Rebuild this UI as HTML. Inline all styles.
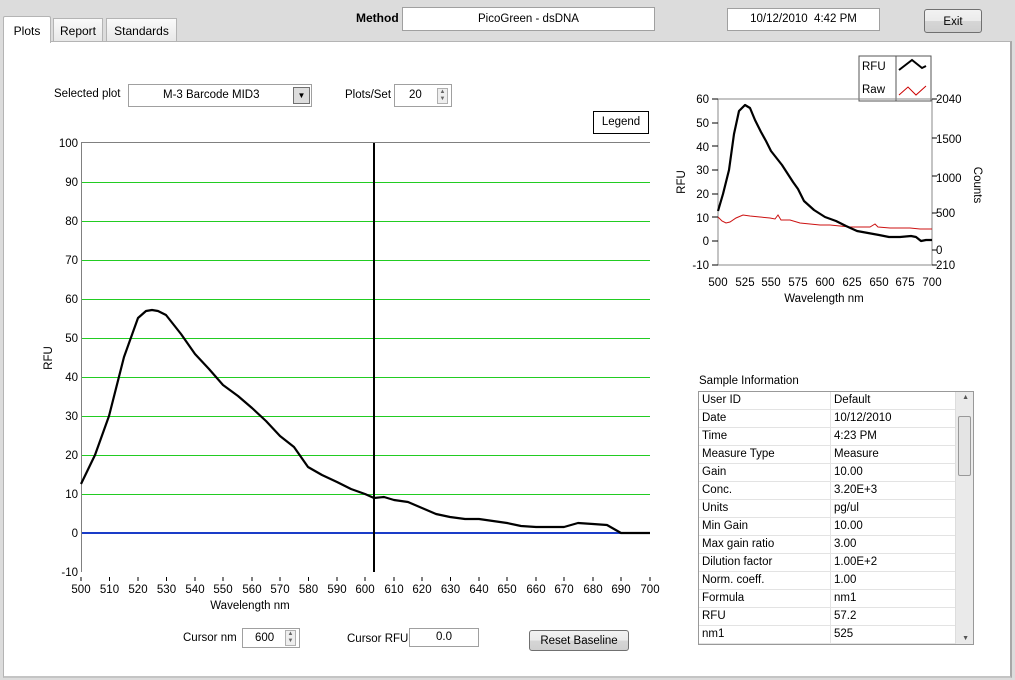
<!DOCTYPE html>
<html><head><meta charset="utf-8"><style>
body{margin:0;width:1015px;height:680px;background:#dcdcdc;font-family:"Liberation Sans",sans-serif;font-size:11.5px;color:#000;position:relative;overflow:hidden}
.a{position:absolute}
.box{position:absolute;background:#fff;border:1px solid #a0a0a0;box-sizing:border-box;text-align:center}
.btn{position:absolute;border:1px solid #707070;border-radius:3px;background:linear-gradient(#f2f2f2,#ebebeb 50%,#d6d6d6 50%,#cfcfcf);box-sizing:border-box;text-align:center}
.spin{position:absolute;width:11px;border:1px solid #b0b0b0;background:#eee;box-sizing:border-box;font-size:6px;line-height:7px;text-align:center;color:#666}
table{border-collapse:collapse;width:258px}
td{height:17px;border-bottom:1px solid #e3e3e3;padding:0 0 0 3px;font-size:11.5px;line-height:17px;white-space:nowrap}
td.c1{width:128px;border-right:1px solid #e3e3e3}
</style></head><body>
<div class="a" style="left:3px;top:41px;width:1006px;height:634px;background:#fff;border:1px solid #b4b4b4;border-right:2px solid #a8a8a8;border-bottom:2px solid #c4c4c4"></div>
<div class="a" style="left:3px;top:16px;width:48px;height:27px;background:#fff;border:1px solid #b4b4b4;border-bottom:none;border-radius:2px 2px 0 0;padding-top:7px;box-sizing:border-box;text-align:center;font-size:12px">Plots</div>
<div class="a" style="left:53px;top:18px;width:50px;height:23px;background:linear-gradient(#fafafa,#e8e8e8);border:1px solid #b4b4b4;border-bottom:none;box-sizing:border-box;padding-top:5px;text-align:center;font-size:12px">Report</div>
<div class="a" style="left:106px;top:18px;width:71px;height:23px;background:linear-gradient(#fafafa,#e8e8e8);border:1px solid #b4b4b4;border-bottom:none;box-sizing:border-box;padding-top:5px;text-align:center;font-size:12px">Standards</div>
<div class="a" style="left:356px;top:11px;font-weight:bold;font-size:12px">Method</div>
<div class="box" style="left:402px;top:7px;width:253px;height:24px;line-height:22px">PicoGreen - dsDNA</div>
<div class="box" style="left:727px;top:8px;width:153px;height:23px;line-height:21px">10/12/2010&nbsp; 4:42 PM</div>
<div class="btn" style="left:924px;top:9px;width:58px;height:24px;line-height:24px">Exit</div>

<div class="a" style="left:54px;top:88px">Selected plot</div>
<div class="box" style="left:128px;top:84px;width:184px;height:23px;line-height:21px;text-align:left;padding-left:34px">M-3 Barcode MID3</div>
<div class="a" style="left:293px;top:87px;width:17px;height:17px;border:1px solid #707070;background:#ddd;box-sizing:border-box;font-size:8px;text-align:center;line-height:16px">▼</div>
<div class="a" style="left:345px;top:89px">Plots/Set</div>
<div class="box" style="left:394px;top:84px;width:58px;height:23px;line-height:21px;text-align:left;padding-left:14px">20</div>
<div class="spin" style="left:437px;top:88px;height:16px">▲<br>▼</div>
<div class="box" style="left:593px;top:111px;width:56px;height:23px;line-height:21px;border-color:#000">Legend</div>

<div class="a" style="left:183px;top:632px">Cursor nm</div>
<div class="box" style="left:242px;top:628px;width:58px;height:20px;line-height:18px;text-align:left;padding-left:12px">600</div>
<div class="spin" style="left:285px;top:630px;height:16px">▲<br>▼</div>
<div class="a" style="left:347px;top:633px">Cursor RFU</div>
<div class="box" style="left:409px;top:628px;width:70px;height:19px;line-height:17px">0.0</div>
<div class="btn" style="left:529px;top:630px;width:100px;height:21px;line-height:20px">Reset Baseline</div>

<svg class="a" style="left:0;top:0" width="1015" height="680" font-family="Liberation Sans" font-size="11.5">
<g fill="#22cc22">
<rect x="82" width="568" y="182" height="1"/><rect x="82" width="568" y="221" height="1"/><rect x="82" width="568" y="260" height="1"/><rect x="82" width="568" y="299" height="1"/><rect x="82" width="568" y="338" height="1"/><rect x="82" width="568" y="377" height="1"/><rect x="82" width="568" y="416" height="1"/><rect x="82" width="568" y="455" height="1"/><rect x="82" width="568" y="494" height="1"/>
</g>
<rect x="82" width="568" y="532" height="2" fill="#1a3cc8"/>
<rect x="81" y="142" width="1" height="430" fill="#808080"/><rect x="81" y="142" width="569" height="1" fill="#808080"/>
<rect x="373" y="143" width="2" height="429" fill="#000"/>
<path d="M81 484L95 455L109 416L124 357L138 318L146 311L152 310L158 311L166 315L181 334L195 354L209 369L223 385L238 396L252 408L266 421L280 436L294 447L308 467L322 475L337 482L351 489L365 494L374 498L384 497L394 500L408 502L422 508L436 514L450 517L465 519L479 519L493 521L507 523L521 526L536 527L550 527L564 527L578 523L593 524L607 525L621 533L650 533" fill="none" stroke="#000" stroke-width="2.2" stroke-linejoin="round"/>
<g text-anchor="end">
<text x="78" y="147">100</text><text x="78" y="186">90</text><text x="78" y="225">80</text><text x="78" y="264">70</text><text x="78" y="303">60</text><text x="78" y="342">50</text><text x="78" y="381">40</text><text x="78" y="420">30</text><text x="78" y="459">20</text><text x="78" y="498">10</text><text x="78" y="537">0</text><text x="78" y="576">-10</text>
</g>
<g stroke="#000"><path d="M81 577v4M109.5 577v4M138 577v4M166.5 577v4M195 577v4M223 577v4M252 577v4M280 577v4M308.5 577v4M337 577v4M365 577v4M394 577v4M422 577v4M450.5 577v4M479 577v4M507 577v4M536 577v4M564 577v4M593 577v4M621 577v4M650 577v4"/></g>
<g text-anchor="middle">
<text x="81" y="593">500</text><text x="109.5" y="593">510</text><text x="138" y="593">520</text><text x="166.5" y="593">530</text><text x="195" y="593">540</text><text x="223" y="593">550</text><text x="252" y="593">560</text><text x="280" y="593">570</text><text x="308.5" y="593">580</text><text x="337" y="593">590</text><text x="365" y="593">600</text><text x="394" y="593">610</text><text x="422" y="593">620</text><text x="450.5" y="593">630</text><text x="479" y="593">640</text><text x="507" y="593">650</text><text x="536" y="593">660</text><text x="564" y="593">670</text><text x="593" y="593">680</text><text x="621" y="593">690</text><text x="650" y="593">700</text>
<text x="250" y="609">Wavelength nm</text>
</g>
<text transform="translate(52,358) rotate(-90)" text-anchor="middle">RFU</text>

<rect x="859" y="56" width="72" height="45" fill="#fff" stroke="#555"/>
<line x1="896" x2="896" y1="56" y2="101" stroke="#555"/>
<text x="862" y="70">RFU</text><text x="862" y="93">Raw</text>
<path d="M899 70L912 60L922 68L926 66" fill="none" stroke="#000" stroke-width="2"/>
<path d="M899 95L908 87L916 95L926 86" fill="none" stroke="#c00" stroke-width="1"/>
<rect x="718" y="99" width="214" height="166" fill="none" stroke="#888"/>
<path d="M718 217L722 221L726 223L730 222L736 218L743 215L750 216L760 217L770 218L775 219L778 215L781 220L790 220L800 223L810 224L820 225L830 225L840 226L850 227L860 227L870 227L875 224L878 227L890 228L900 228L910 228L920 229L932 229" fill="none" stroke="#cc1111" stroke-width="1"/>
<path d="M718 211L723 194L729 170L734 134L739 111L745 105L750 108L755 120L761 132L766 141L771 151L782 165L793 182L798 189L804 201L814 210L825 217L836 221L846 226L857 231L868 233L879 235L889 237L900 237L911 236L916 237L921 241L926 240L932 240" fill="none" stroke="#000" stroke-width="2.2" stroke-linejoin="round"/>
<g text-anchor="end">
<text x="709" y="103">60</text><text x="709" y="127">50</text><text x="709" y="151">40</text><text x="709" y="174">30</text><text x="709" y="198">20</text><text x="709" y="222">10</text><text x="709" y="245">0</text><text x="709" y="269">-10</text>
</g>
<g text-anchor="start">
<text x="936" y="103">2040</text><text x="936" y="182">1000</text><text x="936" y="143">1500</text><text x="936" y="217">500</text><text x="936" y="254">0</text><text x="936" y="269">210</text>
</g>
<g stroke="#000"><path d="M712 99h6M712 123h6M712 146h6M712 170h6M712 194h6M712 217h6M712 241h6M712 265h6M932 99h5M932 138h5M932 176h5M932 213h5M932 250h5M932 265h5"/></g>
<g text-anchor="middle">
<text x="718" y="286">500</text><text x="745" y="286">525</text><text x="771" y="286">550</text><text x="798" y="286">575</text><text x="825" y="286">600</text><text x="852" y="286">625</text><text x="879" y="286">650</text><text x="905" y="286">675</text><text x="932" y="286">700</text>
<text x="824" y="302">Wavelength  nm</text>
</g>
<text transform="translate(685,182) rotate(-90)" text-anchor="middle">RFU</text>
<text transform="translate(974,185) rotate(90)" text-anchor="middle">Counts</text>
</svg>

<div class="a" style="left:699px;top:375px">Sample Information</div>
<div class="a" style="left:698px;top:391px;width:276px;height:254px;border:1px solid #999;background:#fff;box-sizing:border-box;overflow:hidden">
<table>
<tr><td class="c1">User ID</td><td>Default</td></tr>
<tr><td class="c1">Date</td><td>10/12/2010</td></tr>
<tr><td class="c1">Time</td><td>4:23 PM</td></tr>
<tr><td class="c1">Measure Type</td><td>Measure</td></tr>
<tr><td class="c1">Gain</td><td>10.00</td></tr>
<tr><td class="c1">Conc.</td><td>3.20E+3</td></tr>
<tr><td class="c1">Units</td><td>pg/ul</td></tr>
<tr><td class="c1">Min Gain</td><td>10.00</td></tr>
<tr><td class="c1">Max gain ratio</td><td>3.00</td></tr>
<tr><td class="c1">Dilution factor</td><td>1.00E+2</td></tr>
<tr><td class="c1">Norm. coeff.</td><td>1.00</td></tr>
<tr><td class="c1">Formula</td><td>nm1</td></tr>
<tr><td class="c1">RFU</td><td>57.2</td></tr>
<tr><td class="c1">nm1</td><td>525</td></tr>
</table>
<div class="a" style="right:0;top:0;width:17px;height:252px;background:#eaeaea;border-left:1px solid #ddd"></div>
<div class="a" style="right:2px;top:24px;width:13px;height:60px;background:#e4e4e4;border:1px solid #999;border-radius:2px;box-sizing:border-box"></div>
<div class="a" style="right:4px;top:2px;font-size:7px;color:#555">▲</div>
<div class="a" style="right:4px;bottom:2px;font-size:7px;color:#555">▼</div>
</div>
</body></html>
